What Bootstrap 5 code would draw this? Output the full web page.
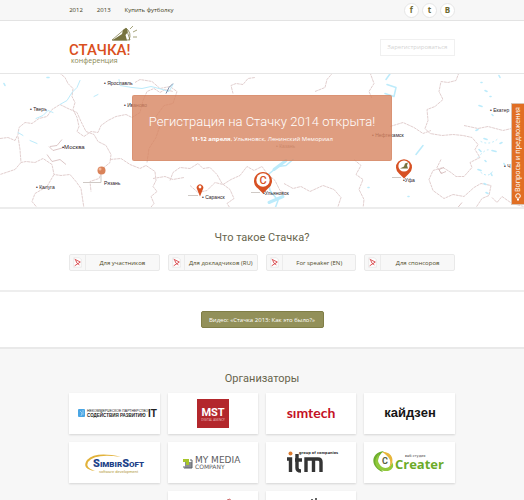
<!DOCTYPE html>
<html lang="ru">
<head>
<meta charset="utf-8">
<meta name="viewport" content="width=device-width, initial-scale=1">
<title>Стачка! Конференция</title>
<link href="https://cdn.jsdelivr.net/npm/bootstrap@5.3.0/dist/css/bootstrap.min.css" rel="stylesheet">
<style>
  body { font-family: "Open Sans", "Noto Sans", sans-serif; font-size: 6px; line-height: 10px; color: #3f3c20; background: #fff; }
  a { color: inherit; text-decoration: none; }
  .wrap { width: 74%; max-width: 960px; margin: 0 auto; padding: 0 1px; }
  .topbar { height: 21px; background: #f7f7f7; border-bottom: 1px solid #e3e3e3; }
  .menu { gap: 14px; }
  .social-links { gap: 3px; }
  .social { width: 15px; height: 15px; background: #fff; border: 1px solid #e6e6e6; font-size: 8px; font-weight: 700; color: #6c682e; }
  .masthead { height: 52px; }
  .brand svg { display: block; width: 72px; height: 42px; }
  .signup { height: 17px; width: 75px; border: 1px solid #f0f0f0; background: #fff; color: #d4d4d4; line-height: 10px; }
  .hero { height: 136px; border-top: 1px solid #e6e6e6; border-bottom: 2px solid #ececec; padding-top: 21px; }
  .hero-map { inset: 0; width: 100%; height: 100%; }
  .promo { width: 260px; height: 66px; border-radius: 2px; background: rgba(215,132,96,.8); color: #fff; border: 1px solid rgba(205,120,85,.25); }
  .promo h1 { font: 300 13px/18px Roboto, sans-serif; margin: 0 0 3px; white-space: nowrap; }
  .feedback { right: 0; top: 29px; width: 13px; height: 102px; background: #e16f24; border: 1px solid #d9c3b3; border-right: 0; color: #fff; padding: 3px 0; }
  .feedback span { writing-mode: vertical-rl; transform: rotate(180deg); font-size: 7px; line-height: 10px; white-space: nowrap; }
  .title { font: 400 11px/16px Roboto, sans-serif; color: #67644c; text-align: center; margin: 0; }
  .about { padding: 21px 0 19px; border-bottom: 2px solid #eee; }
  .doc { height: 17px; background: #f8f8f8; border: 1px solid #e9e9e9; border-radius: 2px; color: #4e4b28; white-space: nowrap; }
  .doc svg { width: 16px; height: 15px; border-right: 1px solid #ececec; flex: none; }
  .video { padding: 19px 0; border-bottom: 2px solid #e9e9e9; }
  .video-btn { height: 17px; width: 123px; background: #929059; border: 1px solid #807e47; border-radius: 2px; color: #fff; padding: 0; line-height: 10px; }
  .partners { background: #f7f7f7; padding: 22px 0 18px; }
  .partners .title { margin-bottom: 6px; }
  .tile { height: 41px; background: #fff; box-shadow: 0 1px 2px rgba(0,0,0,.14); }
  .tile svg { display: block; width: 90px; height: 41px; }
</style>
<script src="https://cdn.jsdelivr.net/npm/bootstrap@5.3.0/dist/js/bootstrap.bundle.min.js"></script>
</head>
<body>
<nav class="topbar" aria-label="Главное меню">
  <div class="wrap h-100 d-flex align-items-center justify-content-between">
    <div class="d-flex menu">
      <a href="#y2012">2012</a><a href="#y2013">2013</a><a href="#shop">Купить футболку</a>
    </div>
    <div class="d-flex social-links">
      <a class="social rounded-circle d-flex align-items-center justify-content-center" href="#fb">f</a>
      <a class="social rounded-circle d-flex align-items-center justify-content-center" href="#tw">t</a>
      <a class="social rounded-circle d-flex align-items-center justify-content-center" href="#vk">B</a>
    </div>
  </div>
</nav>

<header class="masthead wrap d-flex align-items-center justify-content-between">
  <a class="brand" href="#home" aria-label="Стачка! конференция">
    <svg viewBox="0 0 72 42">
      <path d="M43 14 L57 2 L61 14 Z" fill="#fff" stroke="#77733f" stroke-width=".7"/>
      <path d="M43 14.500 L53 8 L54 4 Q57 1 58.500 4 Q59 7 56.500 9 L58 14.500Z" fill="#77733f"/>
      <path d="M57 2 Q63 7 60 14" fill="none" stroke="#77733f" stroke-width=".8"/>
      <path d="M61 3 L64 0 M64 6 L68 4 M64 11 H68" stroke="#8e8b58" stroke-width=".8"/>
      <text x="0" y="29" font-family="Roboto" font-weight="500" font-size="15" fill="#da501d">СТАЧКА!</text>
      <text x="2" y="37" font-family="Open Sans" font-size="7" fill="#8a8753">конференция</text>
    </svg>
  </a>
  <button class="signup p-0" type="button">Зарегистрироваться</button>
</header>

<section class="hero position-relative">
  <svg class="hero-map position-absolute" viewBox="0 73 524 136" preserveAspectRatio="xMidYMid slice" aria-hidden="true">
    <g fill="none" stroke="#e2cfcf" stroke-width="1" stroke-dasharray="3 .6" stroke-linejoin="round">
      <path d="M59 73l6 5 3 6 5 5-1 8 3 6-2 7 4 8 2 9-2 5 7 5 7-5 7 1 3-7 7-5 8-4 10-2 6 3 8-5 3-12 4-9 7-3 6 4 5-3 8 2"/>
      <path d="M0 139l8-1 7 3 3-6 1-7 6-5 7 1 7-5 8-2 5-7 8-5 8 4 9 4 4 9 5 10 8 3 4 7 8 4 5 9-1 8-6 5-5 11-9 3 1 10"/>
      <path d="M18 137l2 13 1 13 5-1 9 1 8-4 9 6 2 10 7 1 9-1 6 7 5 7 3 20M21 163l-6 7-9 3-6 2M54 175l-7 12-12 7-3 8 5 6"/>
      <path d="M110 160l11-1 9 6 10 4 6-3 9 6 1 9-3 6 4 5-6 5 3 7-5 6M153 179l12-2 8 3 11-2"/>
      <path d="M135 83l5-3 12 2 8 7 10-2 7 5-4 12-9 2-8 11 4 9-4 12-7 11-2 14"/>
      <path d="M170 181l3-8 7-5 10 1 8-5 5 5 7-1 7 7 5 9 8 6 4 9-7 5 4 6"/>
      <path d="M190 186l8 7 9-2 8-8 8 2 8-5 9-4 7-9 7 4 8-4 5 7 8 7 5 10 9 4"/>
      <path d="M233 94l-2-8 5-2 7 1 5-6 7-1M315 92l10-4 2-8 6-7M370 73l4 11-5 8 3 7M284 184l9 5 8-2 9 5 13-6 11 4 7 8-3 9M354 160l7 6-5 9 7 5-4 10 5 10-1 9"/>
      <path d="M459 73l-3 8-8 2-7-1-2 10 4 8-8 7-8 3 1 11-3 8 5 5 12 2 11-1 10 1 9 2 6 7-3 5 5 8-10 5 2 5-8 9-8 0-5-4-8-5-10 3-4 9 4 11 11 8 9-4 11 2 10-9 7-4 10 2-2 10-7 3-6 9 2 5"/>
      <path d="M390 127l13-4 11 5 9 6 8-3M464 126l14 3 10-2 15 4 21-5M441 160l-4 8 5 6M492 198l5 5 5-6 10 7 12 3"/>
    </g>
    <path d="M50 147l7-1 5-6M47 155l5 7 8-2 6 5M49 147l4 4 11-3M462 203l-5 6M444 168l-5 2 2 4 5-2" fill="none" stroke="#d3b8b8" stroke-width=".8"/>
    <g fill="none" stroke="#bcebfb" stroke-linecap="round" stroke-linejoin="round">
      <path d="M36 119l7-3 5-5 5 2M60 105l7-4 5-8 5-5 3-7M119 80l1 6 12 2 10 1 9-2 8 2 10 3 4-7M30 141l7 3M18 133l5 3M94 97l4-2" stroke-width="1"/>
      <path d="M387 85l9 3-2 9-9-3M391 73l-5 7M275 209l3-8-8-10-3-15 11-9 8-1 7-6M416 155l7-9" stroke-width="1.500"/>
      <path d="M274 170l12-9M269 203l14-6" stroke-width="3"/>
      <path d="M481 83h1M485 91l2 1M490 97h1M479 106l3 1M492 115l1 1M476 131l2-1M484 139l3 1M479 150l2 2M492 151l4 1M485 161l1 1M478 170l3 1M491 174l1 2M484 184l2 1M500 144l2-1M504 164l1 2M486 193l2 1M368 188h1M408 197h1M4 84l1 2M499 76l1 2M47 78h2" stroke-width="1.6"/>
      <path d="M478 158q8-10 13-7M481 142q8 4 16-2M481 173q8 6 12-2" stroke-width="1" stroke-dasharray="1 3"/>
    </g>
    <path d="M166 94l3-6 4-4" fill="none" stroke="#7b8fae"/>
    <g font-family="Liberation Sans" font-size="5" fill="#2e2229">
      <text x="104" y="85">• Ярославль</text><text x="30" y="111">• Тверь</text><text x="124" y="107">• Иваново</text>
      <text x="62" y="149" font-size="6">•Москва</text><text x="36" y="189">• Калуга</text><text x="104" y="185">Рязань</text>
      <text x="202" y="199">• Саранск</text><text x="263" y="195">•Ульяновск</text><text x="372" y="137">• Нефтекамск</text>
      <text x="403" y="182">•Уфа</text><text x="490" y="112">• Екатер</text><text x="504" y="168">• Ч</text>
      <text x="276" y="148" opacity=".5">• Казань</text>
    </g>
    <path d="M101 175v8M83 183h18M188 196h10M251 193h9M392 178h9" stroke="#cfc9c5" fill="none"/>
    <circle cx="101.500" cy="171" r="4" fill="#d98259"/><circle cx="100" cy="169.500" r="1.500" fill="#f3b799"/>
    <path d="M200 197l-2.800-7a3.300 3.300 0 1 1 5.600 0Z" fill="#d75123"/><circle cx="200" cy="187.500" r="1.400" fill="#fff"/>
    <path d="M263 194l-5-5a9 9 0 1 1 10 0Z" fill="#d75123"/><circle cx="263" cy="180.500" r="6.700" fill="#fff"/>
    <text x="263" y="184.500" text-anchor="middle" font-family="Roboto" font-weight="500" font-size="11" fill="#d75123">С</text>
    <path d="M404 179l-5-5a8 8 0 1 1 10 0Z" fill="#d75123"/><circle cx="404" cy="166.500" r="5.600" fill="#fff"/>
    <path d="M400 169l4-2 1-3 3-1-1 3 1 3Z" fill="#77733f"/>
  </svg>
  <div class="promo position-relative mx-auto d-flex flex-column align-items-center justify-content-center">
    <h1>Регистрация на Стачку 2014 открыта!</h1>
    <div><b>11-12 апреля</b>, Ульяновск, Ленинский Мемориал</div>
  </div>
  <a class="feedback position-absolute d-flex flex-column align-items-center justify-content-between" href="#feedback">
    <span>Вопросы и предложения</span>
    <svg class="flex-shrink-0" width="8" height="8" viewBox="0 0 8 8" aria-hidden="true"><circle cx="4" cy="3" r="2.300" fill="none" stroke="#fff"/><path d="M3 6h2v1.500H3Z" fill="#fff"/></svg>
  </a>
</section>

<section class="about">
  <div class="wrap">
    <h2 class="title">Что такое Стачка?</h2>
    <div class="row row-cols-4 gx-2 mt-2">
      <div class="col"><a class="doc d-flex" href="#members"><svg viewBox="0 0 16 15"><path d="M4 2.500h6l2 2v8H4Z" fill="#fff" stroke="#ddd" stroke-width=".6"/><path d="M5 4l6 3-6 4M6 5q1 4 4 5" fill="none" stroke="#d7494d"/></svg><span class="flex-fill text-center align-self-center">Для участников</span></a></div>
      <div class="col"><a class="doc d-flex" href="#ru"><svg viewBox="0 0 16 15"><path d="M4 2.500h6l2 2v8H4Z" fill="#fff" stroke="#ddd" stroke-width=".6"/><path d="M5 4l6 3-6 4M6 5q1 4 4 5" fill="none" stroke="#d7494d"/></svg><span class="flex-fill text-center align-self-center">Для докладчиков (RU)</span></a></div>
      <div class="col"><a class="doc d-flex" href="#en"><svg viewBox="0 0 16 15"><path d="M4 2.500h6l2 2v8H4Z" fill="#fff" stroke="#ddd" stroke-width=".6"/><path d="M5 4l6 3-6 4M6 5q1 4 4 5" fill="none" stroke="#d7494d"/></svg><span class="flex-fill text-center align-self-center">For speaker (EN)</span></a></div>
      <div class="col"><a class="doc d-flex" href="#sponsors"><svg viewBox="0 0 16 15"><path d="M4 2.500h6l2 2v8H4Z" fill="#fff" stroke="#ddd" stroke-width=".6"/><path d="M5 4l6 3-6 4M6 5q1 4 4 5" fill="none" stroke="#d7494d"/></svg><span class="flex-fill text-center align-self-center">Для спонсоров</span></a></div>
    </div>
  </div>
</section>

<section class="video text-center d-flex justify-content-center">
  <button class="video-btn" type="button">Видео: «Стачка 2013: Как это было?»</button>
</section>

<section class="partners">
  <div class="wrap">
    <h2 class="title">Организаторы</h2>
    <div class="row row-cols-4 g-2 justify-content-center">
      <div class="col"><a class="tile d-flex justify-content-center" href="#it"><svg viewBox="0 0 90 41">
        <rect x="9" y="16" width="7" height="8" rx="1" fill="#4aa6e4"/><path d="M11 18l2 2-1 3M14 17v5" stroke="#b5ddf6" fill="none" stroke-width=".7"/>
        <g font-family="Liberation Sans" fill="#222"><text x="18" y="19" font-size="3.500">НЕКОММЕРЧЕСКОЕ ПАРТНЕРСТВО</text><text x="18" y="24" font-size="4.500" font-weight="700">СОДЕЙСТВИЯ РАЗВИТИЮ</text><text x="79" y="24" font-size="10" font-weight="700">IT</text></g></svg></a></div>
      <div class="col"><a class="tile d-flex justify-content-center" href="#mst"><svg viewBox="0 0 90 41">
        <rect x="29" y="6" width="32" height="29" fill="#b3272c"/><text x="45" y="23" text-anchor="middle" font-family="Roboto" font-weight="700" font-size="11" fill="#fff">MST</text><text x="45" y="28" text-anchor="middle" font-family="Open Sans" font-size="3" fill="#f0c5c5">DIGITAL AGENCY</text></svg></a></div>
      <div class="col"><a class="tile d-flex justify-content-center" href="#simtech"><svg viewBox="0 0 90 41">
        <text x="45" y="25" text-anchor="middle" font-family="Lato" font-weight="700" font-size="14" fill="#c41226">sımtech</text></svg></a></div>
      <div class="col"><a class="tile d-flex justify-content-center" href="#kaizen"><svg viewBox="0 0 90 41">
        <text x="45" y="24" text-anchor="middle" font-family="Liberation Sans" font-weight="700" font-size="13" fill="#151515">кайдзен</text></svg></a></div>
      <div class="col"><a class="tile d-flex justify-content-center" href="#simbirsoft"><svg viewBox="0 0 90 41">
        <path d="M52 15q-26-4-33 5-3 6 7 9-14-2-8-11 9-9 34-3Z" fill="#e2b23a"/>
        <text x="24" y="25" font-family="Roboto" font-weight="900" font-size="8" fill="#203f88"><tspan font-size="11">S</tspan>IMBIR<tspan font-size="11">S</tspan>OFT</text>
        <text x="30" y="31" font-family="Liberation Sans" font-size="4" fill="#b29a3c">software development</text></svg></a></div>
      <div class="col"><a class="tile d-flex justify-content-center" href="#mymedia"><svg viewBox="0 0 90 41">
        <path d="M17 20h7v6h-7Z" fill="#8b8d94"/><path d="M15 17h6v6h-3v-3h-3Z" fill="#a6c52b"/><path d="M22 18h2v8h-8v-2" fill="none" stroke="#5f626a"/>
        <g font-family="DejaVu Sans" fill="#5c5c60"><text x="27" y="21" font-size="9">MY MEDIA</text><text x="27" y="27" font-size="6">COMPANY</text></g></svg></a></div>
      <div class="col"><a class="tile d-flex justify-content-center" href="#itm"><svg viewBox="0 0 90 41">
        <circle cx="24.500" cy="11.500" r="2" fill="#dc7b2f"/><path d="M21 17h3.500v13M31 12v14q0 3 4 3M29 18h7M40 30V17h12q3 0 3 3v10M47.500 18v12" fill="none" stroke="#343434" stroke-width="3.400"/>
        <text x="33" y="12" font-family="DejaVu Sans" font-weight="700" font-size="3.500" fill="#333">group of companies</text></svg></a></div>
      <div class="col"><a class="tile d-flex justify-content-center" href="#creater"><svg viewBox="0 0 90 41">
        <path d="M19 9c-15 2-13 17-1 21-7-8-7-15 1-21Z" fill="#6dae2d"/><path d="M14 12c-8 8-2 18 9 17 6-2 6-6 4-9-1 7-11 9-14-1Z" fill="#91c93b"/><path d="M17 10c10-1 14 9 7 16 3-7 1-11-7-16Z" fill="#e7b63b"/>
        <text x="17" y="22" font-family="Roboto" font-weight="700" font-size="9" fill="#57623f">C</text>
        <text x="30" y="27" font-family="Open Sans" font-weight="700" font-size="13" fill="#6cab29">Creater</text><text x="40" y="15" font-family="DejaVu Sans" font-size="3.500" fill="#444">веб-студия</text></svg></a></div>
      <div class="col"><a class="tile d-flex justify-content-center" href="#p9"><svg viewBox="0 0 90 41"><path d="M59 9l3-1 1 3" stroke="#cf6b6b" fill="none"/></svg></a></div>
      <div class="col"><a class="tile d-flex justify-content-center" href="#p10"><svg viewBox="0 0 90 41"><path d="M46 8v3M50 7v2M50 10v12" stroke="#333" stroke-width="1.500"/></svg></a></div>
    </div>
  </div>
</section>
</body>
</html>
